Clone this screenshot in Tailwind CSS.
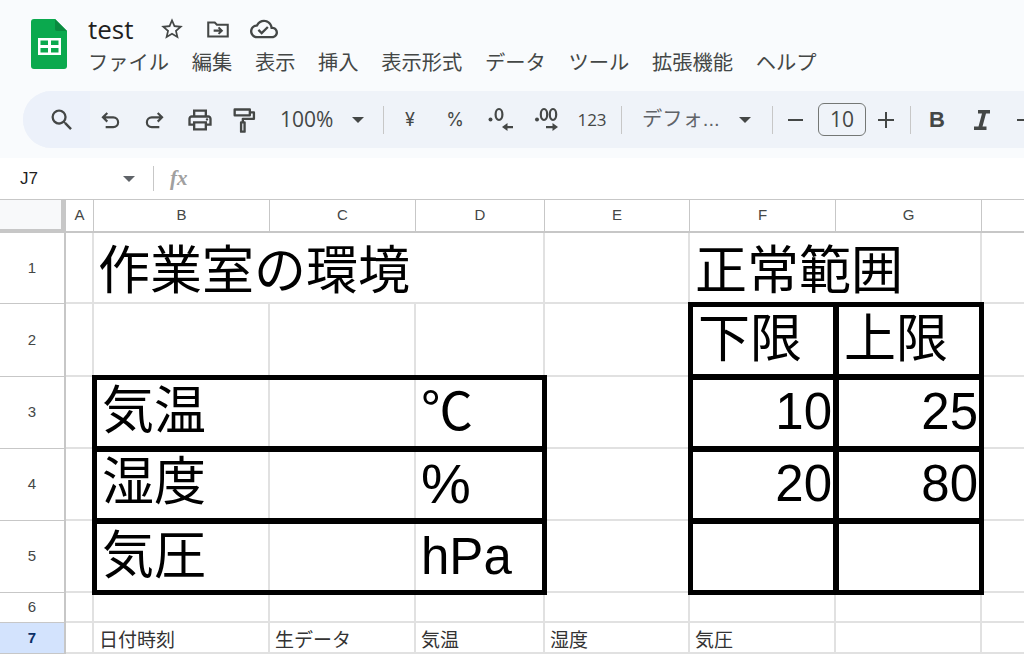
<!DOCTYPE html>
<html lang="ja"><head><meta charset="utf-8">
<script src="https://cdn.jsdelivr.net/npm/@tailwindcss/browser@4"></script>
</head>
<body class="w-[1024px] h-[655px] overflow-hidden bg-white font-['Liberation_Sans','Noto_Sans_CJK_JP',sans-serif] text-black">
<header class="h-[158px] bg-[#f9fbfd] pt-[19px] pl-[23px] flex flex-col">
  <div class="flex h-[72px] pl-[8px]">
    <svg width="36" height="50" viewBox="0 0 36 50" class="shrink-0">
      <path d="M3 0H24L36 12V47a3 3 0 0 1-3 3H3a3 3 0 0 1-3-3V3a3 3 0 0 1 3-3z" fill="#0ba94e"/>
      <path d="M24 0L36 12H26a2 2 0 0 1-2-2z" fill="#0a8a3f"/>
      <path d="M7 19H30V36H7z M9.5 21.5V26H17V21.5z M20 21.5V26H27.5V21.5z M9.5 29V33.5H17V29z M20 29V33.5H27.5V29z" fill="#fff" fill-rule="evenodd"/>
    </svg>
    <div class="ml-[21px] -mt-[7px]">
      <div class="flex items-center h-[34px]">
        <span class="text-[26px] leading-none text-[#1f1f1f] font-['Open_Sans',sans-serif] w-[71px]">test</span>
        <svg width="26" height="26" viewBox="0 0 24 24" fill="#444746"><path fill-rule="evenodd" d="M22 9.24l-7.19-.62L12 2 9.19 8.63 2 9.24l5.46 4.73L5.82 21 12 17.27 18.18 21l-1.63-7.03L22 9.24zM12 15.4l-3.76 2.27 1-4.28-3.32-2.88 4.38-.38L12 6.1l1.71 4.04 4.38.38-3.32 2.88 1 4.28L12 15.4z"/></svg>
        <svg width="26" height="26" viewBox="0 0 24 24" fill="none" stroke="#444746" stroke-width="1.9" class="ml-[20px]"><path d="M3 19V6h6l2 2h10v11z"/><path d="M8 13.5h7M12.5 10.5l3 3-3 3"/></svg>
        <svg width="28" height="28" viewBox="0 0 24 24" fill="#444746" class="ml-[19px]"><path d="M19.35 10.04C18.67 6.59 15.64 4 12 4 9.11 4 6.6 5.64 5.35 8.04 2.34 8.36 0 10.91 0 14c0 3.31 2.69 6 6 6h13c2.76 0 5-2.24 5-5 0-2.64-2.05-4.78-4.65-4.96zM19 18H6c-2.21 0-4-1.79-4-4 0-2.05 1.53-3.76 3.56-3.97l1.07-.11.5-.95C8.08 7.14 9.94 6 12 6c2.62 0 4.88 1.86 5.39 4.43l.3 1.5 1.53.11c1.56.1 2.78 1.41 2.78 2.96 0 1.65-1.35 3-3 3zm-9-3.82l-2.09-2.09L6.5 13.5 10 17l6.01-6.01-1.41-1.41z"/></svg>
      </div>
      <nav class="flex gap-[22.6px] text-[20.3px] leading-[30px] text-[#444746] mt-[2px] whitespace-nowrap">
        <span>ファイル</span><span>編集</span><span>表示</span><span>挿入</span><span>表示形式</span><span>データ</span><span>ツール</span><span>拡張機能</span><span>ヘルプ</span>
      </nav>
    </div>
  </div>
  <div class="h-[57px] bg-[#eff3f9] rounded-l-[29px] flex items-center text-[#444746] whitespace-nowrap overflow-hidden *:shrink-0">
    <div class="w-[67px] h-full bg-[#ecf1fa] flex items-center justify-end pr-[14px]">
      <svg width="28" height="28" viewBox="0 0 24 24" fill="#444746"><path d="M15.5 14h-.79l-.28-.27A6.471 6.471 0 0 0 16 9.5 6.5 6.5 0 1 0 9.5 16c1.61 0 3.09-.59 4.23-1.57l.27.28v.79l5 4.99L20.49 19l-4.99-5zm-6 0C7.01 14 5 11.99 5 9.5S7.01 5 9.5 5 14 7.01 14 9.5 11.99 14 9.5 14z"/></svg>
    </div>
    <div class="w-[40px] flex justify-center"><svg width="26" height="26" viewBox="0 0 24 24" fill="none" stroke="#444746" stroke-width="2"><path d="M9.5 5.5L5.5 9.5l4 4M5.5 9.5H15a4.5 4.5 0 0 1 0 9H8"/></svg></div>
    <div class="w-[50px] flex justify-center"><svg width="26" height="26" viewBox="0 0 24 24" fill="none" stroke="#444746" stroke-width="2"><path d="M14.5 5.5l4 4-4 4M18.5 9.5H9a4.5 4.5 0 0 0 0 9h7"/></svg></div>
    <div class="w-[40px] flex justify-center"><svg width="28" height="28" viewBox="0 0 24 24" fill="#444746"><path d="M19 8h-1V3H6v5H5c-1.66 0-3 1.34-3 3v6h4v4h12v-4h4v-6c0-1.66-1.34-3-3-3zM8 5h8v3H8V5zm8 12v2H8v-4h8v2zm2-2v-2H6v2H4v-4c0-.55.45-1 1-1h14c.55 0 1 .45 1 1v4h-2z"/><circle cx="18" cy="11.5" r="1"/></svg></div>
    <div class="w-[48px] flex justify-center"><svg width="28" height="28" viewBox="0 0 24 24" fill="none" stroke="#444746" stroke-width="2" stroke-linejoin="round"><path d="M4 3h13v5H4zM17 5.5h3.5V11H11v3"/><path d="M9.5 14h3v8h-3z"/></svg></div>
    <span class="w-[84px] pl-[12px] text-[21px] font-['Open_Sans',sans-serif]">100%</span>
    <div class="w-0 h-0 border-x-[6px] border-t-[6px] border-x-transparent border-t-[#444746]"></div>
    <div class="ml-[19px] w-px h-[28px] bg-[#c7c7c7]"></div>
    <span class="w-[52px] text-center text-[18px] font-['Inter',sans-serif]">¥</span>
    <span class="w-[38px] text-center text-[18px] font-['Inter',sans-serif]">%</span>
    <div class="w-[52px] flex justify-center"><svg width="30" height="30" viewBox="0 0 30 30" fill="#444746"><circle cx="5.5" cy="14.5" r="2"/><ellipse cx="14" cy="9.5" rx="3.4" ry="5.5" fill="none" stroke="#444746" stroke-width="2.2"/><path d="M20 21h8v2.2h-8z"/><path d="M22.5 18L17 22l5.5 4z"/></svg></div>
    <div class="w-[42px] flex justify-center"><svg width="32" height="30" viewBox="0 0 32 30" fill="#444746"><circle cx="6" cy="14.5" r="2"/><ellipse cx="13" cy="9.5" rx="3.2" ry="5.5" fill="none" stroke="#444746" stroke-width="2.2"/><ellipse cx="22" cy="9.5" rx="3.2" ry="5.5" fill="none" stroke="#444746" stroke-width="2.2"/><path d="M15 21h8v2.2h-8z"/><path d="M21.5 18L27 22l-5.5 4z"/></svg></div>
    <span class="w-[48px] text-center text-[17px] font-['Open_Sans',sans-serif]">123</span>
    <div class="ml-[5px] w-px h-[28px] bg-[#c7c7c7]"></div>
    <span class="w-[117px] pl-[20px] text-[20.3px] text-[#5f6368]">デフォ...</span>
    <div class="w-0 h-0 border-x-[6px] border-t-[6px] border-x-transparent border-t-[#444746]"></div>
    <div class="ml-[21px] w-px h-[28px] bg-[#c7c7c7]"></div>
    <div class="w-[45px] flex justify-center"><div class="w-[15px] h-[2px] bg-[#444746]"></div></div>
    <div class="w-[48px] h-[33px] rounded-[6px] border border-[#747775] flex items-center justify-center text-[21px] font-['Open_Sans',sans-serif]">10</div>
    <div class="w-[40px] flex justify-center"><svg width="16" height="16" viewBox="0 0 16 16" fill="#444746"><path d="M7 0h2v7h7v2H9v7H7V9H0V7h7z"/></svg></div>
    <div class="ml-[4px] w-px h-[28px] bg-[#c7c7c7]"></div>
    <div class="w-[52px] text-center text-[22px] font-bold">B</div>
    <div class="w-[38px] flex justify-center"><svg width="16" height="20" viewBox="0 0 16 20" fill="#444746"><path d="M4 0h12v3.5h-4L8.5 16.5h4V20H0v-3.5h4.5L8 3.5H4z"/></svg></div>
    <div class="ml-[16px] w-[14px] h-[2px] bg-[#444746]"></div>
  </div>
</header>
<div class="h-[41px] bg-white flex items-center text-[#444746]">
  <span class="w-[123px] pl-[20px] text-[17px] text-[#1f1f1f]">J7</span>
  <div class="w-0 h-0 border-x-[6px] border-t-[6px] border-x-transparent border-t-[#5f6368]"></div>
  <div class="ml-[18px] w-px h-[25px] bg-[#c7c7c7]"></div>
  <span class="ml-[16px] text-[21px] italic font-bold font-['Liberation_Serif',serif] text-[#a0a0a0]">fx</span>
</div>
<main class="grid relative grid-cols-[66px_28px_176px_146px_129px_145px_146px_146px_42px] grid-rows-[34px_71px_73px_72px_72px_72px_30px_31px] text-[#444746]">
  <!-- header row -->
  <div class="bg-[#f8f9fa] border-t border-r-[5px] border-b-[4px] border-[#c7c7c7]"></div>
  <div class="flex items-center justify-center text-[15px] border-t border-r border-b-2 border-[#c7c7c7]">A</div>
  <div class="flex items-center justify-center text-[15px] border-t border-r border-b-2 border-[#c7c7c7]">B</div>
  <div class="flex items-center justify-center text-[15px] border-t border-r border-b-2 border-[#c7c7c7]">C</div>
  <div class="flex items-center justify-center text-[15px] border-t border-r border-b-2 border-[#c7c7c7]">D</div>
  <div class="flex items-center justify-center text-[15px] border-t border-r border-b-2 border-[#c7c7c7]">E</div>
  <div class="flex items-center justify-center text-[15px] border-t border-r border-b-2 border-[#c7c7c7]">F</div>
  <div class="flex items-center justify-center text-[15px] border-t border-r border-b-2 border-[#c7c7c7]">G</div>
  <div class="border-t border-b-2 border-[#c7c7c7]"></div>
  <!-- row 1 -->
  <div class="flex items-center justify-center text-[15px] border-r-2 border-b border-[#c7c7c7]">1</div>
  <div class="border-r-2 border-b-2 border-[#e1e1e1]"></div>
  <div class="col-span-3 text-[52px] leading-[68px] pl-[4px] text-black font-['Noto_Sans_CJK_JP',sans-serif] whitespace-nowrap border-b-2 border-r-2 border-[#e1e1e1]">作業室の環境</div>
  <div class="border-r-2 border-b-2 border-[#e1e1e1]"></div>
  <div class="col-span-2 text-[52px] leading-[68px] pl-[5px] text-black font-['Noto_Sans_CJK_JP',sans-serif] whitespace-nowrap border-b-2 border-r-2 border-[#e1e1e1]">正常範囲</div>
  <div class="border-b-2 border-[#e1e1e1]"></div>
  <!-- row 2 -->
  <div class="flex items-center justify-center text-[15px] border-r-2 border-b border-[#c7c7c7]">2</div>
  <div class="border-r-2 border-b-2 border-[#e1e1e1]"></div>
  <div class="border-r-2 border-b-2 border-[#e1e1e1]"></div>
  <div class="border-r-2 border-b-2 border-[#e1e1e1]"></div>
  <div class="border-r-2 border-b-2 border-[#e1e1e1]"></div>
  <div class="border-r-2 border-b-2 border-[#e1e1e1]"></div>
  <div class="text-[52px] leading-[61px] pl-[8px] text-black font-['Noto_Sans_CJK_JP',sans-serif] border-r-2 border-b-2 border-[#e1e1e1]">下限</div>
  <div class="text-[52px] leading-[61px] pl-[8px] text-black font-['Noto_Sans_CJK_JP',sans-serif] border-r-2 border-b-2 border-[#e1e1e1]">上限</div>
  <div class="border-b-2 border-[#e1e1e1]"></div>
  <!-- row 3 -->
  <div class="flex items-center justify-center text-[15px] border-r-2 border-b border-[#c7c7c7]">3</div>
  <div class="border-r-2 border-b-2 border-[#e1e1e1]"></div>
  <div class="text-[52px] leading-[60px] pl-[8px] text-black font-['Noto_Sans_CJK_JP',sans-serif] border-r-2 border-b-2 border-[#e1e1e1]">気温</div>
  <div class="border-r-2 border-b-2 border-[#e1e1e1]"></div>
  <div class="text-[52px] leading-[62px] pl-[5px] text-black font-['Noto_Sans_CJK_JP',sans-serif] border-r-2 border-b-2 border-[#e1e1e1]">℃</div>
  <div class="border-r-2 border-b-2 border-[#e1e1e1]"></div>
  <div class="text-[51px] leading-[70px] text-right pr-[2px] text-black border-r-2 border-b-2 border-[#e1e1e1]">10</div>
  <div class="text-[51px] leading-[70px] text-right pr-[2px] text-black border-r-2 border-b-2 border-[#e1e1e1]">25</div>
  <div class="border-b-2 border-[#e1e1e1]"></div>
  <!-- row 4 -->
  <div class="flex items-center justify-center text-[15px] border-r-2 border-b border-[#c7c7c7]">4</div>
  <div class="border-r-2 border-b-2 border-[#e1e1e1]"></div>
  <div class="text-[52px] leading-[58px] pl-[8px] text-black font-['Noto_Sans_CJK_JP',sans-serif] border-r-2 border-b-2 border-[#e1e1e1]">湿度</div>
  <div class="border-r-2 border-b-2 border-[#e1e1e1]"></div>
  <div class="text-[56px] leading-[70px] pl-[5px] text-black border-r-2 border-b-2 border-[#e1e1e1]">%</div>
  <div class="border-r-2 border-b-2 border-[#e1e1e1]"></div>
  <div class="text-[51px] leading-[70px] text-right pr-[2px] text-black border-r-2 border-b-2 border-[#e1e1e1]">20</div>
  <div class="text-[51px] leading-[70px] text-right pr-[2px] text-black border-r-2 border-b-2 border-[#e1e1e1]">80</div>
  <div class="border-b-2 border-[#e1e1e1]"></div>
  <!-- row 5 -->
  <div class="flex items-center justify-center text-[15px] border-r-2 border-b border-[#c7c7c7]">5</div>
  <div class="border-r-2 border-b-2 border-[#e1e1e1]"></div>
  <div class="text-[52px] leading-[62px] pl-[8px] text-black font-['Noto_Sans_CJK_JP',sans-serif] border-r-2 border-b-2 border-[#e1e1e1]">気圧</div>
  <div class="border-r-2 border-b-2 border-[#e1e1e1]"></div>
  <div class="text-[51px] leading-[72px] pl-[5px] text-black border-r-2 border-b-2 border-[#e1e1e1]">hPa</div>
  <div class="border-r-2 border-b-2 border-[#e1e1e1]"></div>
  <div class="border-r-2 border-b-2 border-[#e1e1e1]"></div>
  <div class="border-r-2 border-b-2 border-[#e1e1e1]"></div>
  <div class="border-b-2 border-[#e1e1e1]"></div>
  <!-- row 6 -->
  <div class="flex items-center justify-center text-[15px] border-r-2 border-b border-[#c7c7c7]">6</div>
  <div class="border-r-2 border-b-2 border-[#e1e1e1]"></div>
  <div class="border-r-2 border-b-2 border-[#e1e1e1]"></div>
  <div class="border-r-2 border-b-2 border-[#e1e1e1]"></div>
  <div class="border-r-2 border-b-2 border-[#e1e1e1]"></div>
  <div class="border-r-2 border-b-2 border-[#e1e1e1]"></div>
  <div class="border-r-2 border-b-2 border-[#e1e1e1]"></div>
  <div class="border-r-2 border-b-2 border-[#e1e1e1]"></div>
  <div class="border-b-2 border-[#e1e1e1]"></div>
  <!-- row 7 -->
  <div class="flex items-center justify-center text-[15px] font-bold bg-[#d3e3fd] text-[#0b2f66] border-r-2 border-b border-[#c7c7c7]">7</div>
  <div class="border-r-2 border-b-2 border-[#e1e1e1]"></div>
  <div class="text-[19px] leading-[32px] pl-[5px] font-['Noto_Sans_CJK_JP',sans-serif] text-[#333] border-r-2 border-b-2 border-[#e1e1e1]">日付時刻</div>
  <div class="text-[19px] leading-[32px] pl-[5px] font-['Noto_Sans_CJK_JP',sans-serif] text-[#333] border-r-2 border-b-2 border-[#e1e1e1]">生データ</div>
  <div class="text-[19px] leading-[32px] pl-[5px] font-['Noto_Sans_CJK_JP',sans-serif] text-[#333] border-r-2 border-b-2 border-[#e1e1e1]">気温</div>
  <div class="text-[19px] leading-[32px] pl-[5px] font-['Noto_Sans_CJK_JP',sans-serif] text-[#333] border-r-2 border-b-2 border-[#e1e1e1]">湿度</div>
  <div class="text-[19px] leading-[32px] pl-[5px] font-['Noto_Sans_CJK_JP',sans-serif] text-[#333] border-r-2 border-b-2 border-[#e1e1e1]">気圧</div>
  <div class="border-r-2 border-b-2 border-[#e1e1e1]"></div>
  <div class="border-b-2 border-[#e1e1e1]"></div>
  <!-- thick borders laid over the cells, on the same grid -->
  <div class="absolute inset-0 grid grid-cols-[66px_28px_176px_146px_129px_145px_146px_146px_42px] grid-rows-[34px_71px_73px_72px_72px_72px_30px_31px] pointer-events-none">
    <div class="col-start-3 col-span-3 row-start-4 -m-[2px] border-[5px] border-black"></div>
    <div class="col-start-3 col-span-3 row-start-5 -m-[2px] border-[5px] border-black"></div>
    <div class="col-start-3 col-span-3 row-start-6 -m-[2px] border-[5px] border-black"></div>
    <div class="col-start-7 row-start-3 -m-[2px] border-[5px] border-black"></div>
    <div class="col-start-8 row-start-3 -m-[2px] border-[5px] border-black"></div>
    <div class="col-start-7 row-start-4 -m-[2px] border-[5px] border-black"></div>
    <div class="col-start-8 row-start-4 -m-[2px] border-[5px] border-black"></div>
    <div class="col-start-7 row-start-5 -m-[2px] border-[5px] border-black"></div>
    <div class="col-start-8 row-start-5 -m-[2px] border-[5px] border-black"></div>
    <div class="col-start-7 row-start-6 -m-[2px] border-[5px] border-black"></div>
    <div class="col-start-8 row-start-6 -m-[2px] border-[5px] border-black"></div>
  </div>
</main>
</body></html>
